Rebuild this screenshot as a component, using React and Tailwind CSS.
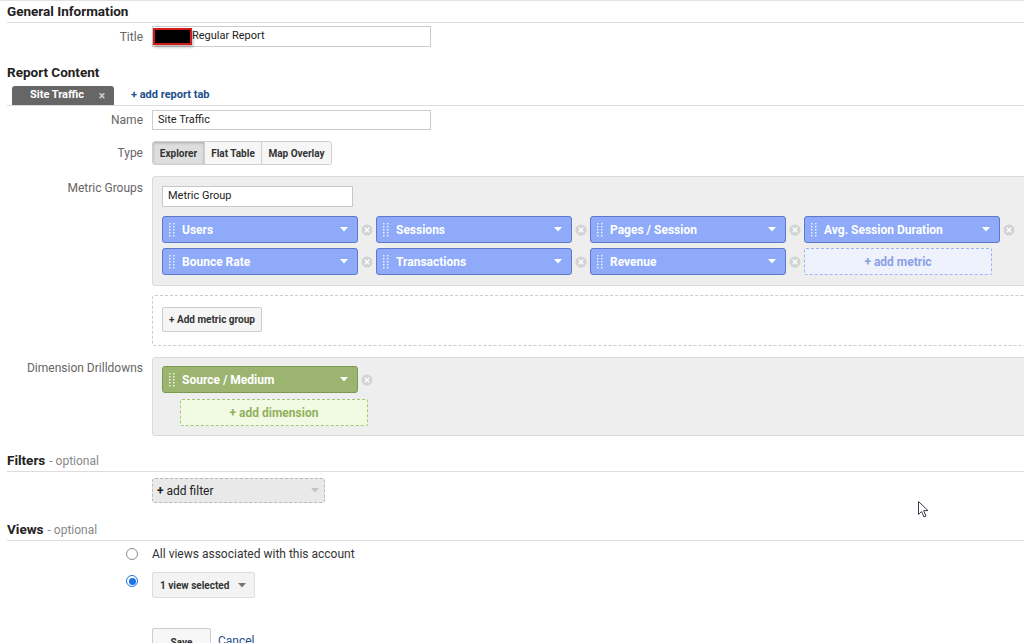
import React from "react";

const Handle = ({ color = "#ffffff" }) => (
  <svg width="6" height="14" viewBox="0 0 6 14" className="shrink-0">
    {[0, 1, 2, 3, 4].map((r) => (
      <React.Fragment key={r}>
        <rect x="0" y={r * 3} width="1.5" height="1.5" fill={color} opacity="0.85" />
        <rect x="4" y={r * 3} width="1.5" height="1.5" fill={color} opacity="0.85" />
      </React.Fragment>
    ))}
  </svg>
);

const Caret = ({ color = "#ffffff" }) => (
  <svg width="8" height="5" viewBox="0 0 8 5" className="shrink-0">
    <path d="M0 0 L8 0 L4 4.5 Z" fill={color} />
  </svg>
);

const RemoveIcon = () => (
  <svg width="12" height="12" viewBox="0 0 12 12" className="shrink-0">
    <circle cx="6" cy="6" r="5.5" fill="#d3d3d3" />
    <path d="M3.8 3.8 L8.2 8.2 M8.2 3.8 L3.8 8.2" stroke="#ffffff" strokeWidth="1.4" />
  </svg>
);

const Chip = ({ label, green }) => (
  <div className="flex items-center">
    <div
      className={
        green
          ? "flex items-center w-[196px] h-[27px] rounded-[3px] border border-[#7d9a53] bg-[#9bb570] pl-[6px] pr-[9px]"
          : "flex items-center w-[196px] h-[27px] rounded-[3px] border border-[#5f77cc] bg-[#8eaaf8] pl-[6px] pr-[9px]"
      }
    >
      <Handle />
      <span className="ml-[7px] flex-1 text-[12px] font-bold text-white leading-none">{label}</span>
      <Caret />
    </div>
    <div className="w-[18px] flex justify-center">
      <RemoveIcon />
    </div>
  </div>
);

const Label = ({ children, className = "" }) => (
  <div className={"text-right text-[12px] text-[#666666] " + className}>{children}</div>
);

const Heading = ({ title, optional, className = "" }) => (
  <div className={"ml-[7px] h-[22px] border-b border-[#dddddd] flex items-center " + className}>
    <span className="text-[13.5px] font-bold text-[#222222]">{title}</span>
    {optional && <span className="text-[12px] text-[#888888] ml-[4px]">- optional</span>}
  </div>
);

export default function App() {
  return (
    <div className="w-[1024px] h-[643px] overflow-hidden bg-white relative border-t border-[#e2e2e2] font-['Roboto','Liberation_Sans',sans-serif] text-[#222222]">
      <Heading title="General Information" className="-mt-[1px] h-[23px]" />

      {/* Title */}
      <div className="mt-[3px] grid grid-cols-[143px_1fr] gap-x-[9px] items-center">
        <Label className="pt-[1px]">Title</Label>
        <div className="w-[279px] h-[21px] border border-[#cccccc] flex items-center">
          <div className="w-[39px] h-[17px] bg-black border-2 border-[#d11a1a] shadow-[1px_2px_3px_rgba(0,0,0,0.3)]" />
          <span className="text-[11px] text-[#222222]">Regular Report</span>
        </div>
      </div>

      {/* Report Content */}
      <div className="mt-[16px] ml-[7px] h-[18px] flex items-center">
        <span className="text-[13.5px] font-bold text-[#222222]">Report Content</span>
      </div>
      <div className="mt-[5px] ml-[7px] border-b border-[#dddddd] flex items-end h-[20px]">
        <div className="ml-[5px] w-[102px] h-[19px] bg-[#666666] rounded-t-[3px] flex items-center pl-[18px] pr-[9px]">
          <span className="text-[11px] font-bold text-white flex-1">Site Traffic</span>
          <span className="text-[12px] font-bold text-[#cfcfcf] leading-none">×</span>
        </div>
        <div className="ml-[17px] h-[19px] flex items-center">
          <span className="text-[11px] font-bold text-[#1e4f8d]">+ add report tab</span>
        </div>
      </div>

      {/* Name */}
      <div className="mt-[4px] grid grid-cols-[143px_1fr] gap-x-[9px] items-center">
        <Label>Name</Label>
        <div className="w-[279px] h-[20px] border border-[#cccccc] flex items-center pl-[5px]">
          <span className="text-[11px] text-[#222222]">Site Traffic</span>
        </div>
      </div>

      {/* Type */}
      <div className="mt-[11px] grid grid-cols-[143px_1fr] gap-x-[9px] items-start">
        <Label className="pt-[3px]">Type</Label>
        <div className="flex h-[24px] w-fit border border-[#d0d0d0] rounded-[3px] overflow-hidden text-[10px] font-bold text-[#333333]">
          <div className="w-[51px] flex items-center justify-center bg-[#dedede] shadow-[inset_0_1px_3px_rgba(0,0,0,0.25)]">Explorer</div>
          <div className="w-[57px] flex items-center justify-center bg-[#f6f6f6] border-l border-[#d0d0d0]">Flat Table</div>
          <div className="w-[70px] flex items-center justify-center bg-[#f6f6f6] border-l border-[#d0d0d0]">Map Overlay</div>
        </div>
      </div>

      {/* Metric Groups */}
      <div className="mt-[11px] grid grid-cols-[143px_1fr] gap-x-[9px] items-start">
        <Label className="pt-[3px]">Metric Groups</Label>
        <div className="w-[890px] h-[110px] bg-[#eeeeee] border border-[#dadada] rounded-[3px] pl-[9px] pt-[9px]">
          <div className="w-[191px] h-[21px] bg-white border border-[#c8c8c8] flex items-center pl-[5px]">
            <span className="text-[11px] text-[#222222]">Metric Group</span>
          </div>
          <div className="mt-[9px] flex flex-col gap-[5px]">
            <div className="flex">
              <Chip label="Users" />
              <Chip label="Sessions" />
              <Chip label="Pages / Session" />
              <Chip label="Avg. Session Duration" />
            </div>
            <div className="flex">
              <Chip label="Bounce Rate" />
              <Chip label="Transactions" />
              <Chip label="Revenue" />
              <div className="w-[188px] h-[27px] border border-dashed border-[#9fb3ef] bg-[#eef2fd] rounded-[2px] flex items-center justify-center">
                <span className="text-[12px] font-bold text-[#8b9fe6]">+ add metric</span>
              </div>
            </div>
          </div>
        </div>
      </div>

      {/* Add metric group */}
      <div className="mt-[9px] grid grid-cols-[143px_1fr] gap-x-[9px]">
        <div />
        <div className="w-[890px] h-[51px] border border-dashed border-[#cccccc] rounded-[3px] pl-[9px] pt-[11px]">
          <div className="w-[100px] h-[25px] bg-[#f5f5f5] border border-[#cccccc] rounded-[2px] flex items-center justify-center">
            <span className="text-[10px] font-bold text-[#333333]">+ Add metric group</span>
          </div>
        </div>
      </div>

      {/* Dimension Drilldowns */}
      <div className="mt-[11px] grid grid-cols-[143px_1fr] gap-x-[9px] items-start">
        <Label className="pt-[2px]">Dimension Drilldowns</Label>
        <div className="w-[890px] h-[79px] bg-[#eeeeee] border border-[#dadada] rounded-[3px] pl-[9px] pt-[8px]">
          <Chip label="Source / Medium" green />
          <div className="mt-[6px] ml-[18px] w-[188px] h-[27px] border border-dashed border-[#a9c578] bg-[#f1fbe4] rounded-[2px] flex items-center justify-center">
            <span className="text-[12px] font-bold text-[#91b05c]">+ add dimension</span>
          </div>
        </div>
      </div>

      {/* Filters */}
      <Heading title="Filters" optional className="mt-[14px]" />
      <div className="mt-[6px] grid grid-cols-[143px_1fr] gap-x-[9px]">
        <div />
        <div className="w-[173px] h-[25px] bg-[#e9e9e9] border border-dashed border-[#bbbbbb] rounded-[3px] flex items-center pl-[4px] pr-[5px]">
          <span className="text-[12px] text-[#222222] flex-1">
            <span className="font-bold">+</span> add filter
          </span>
          <Caret color="#c4c4c4" />
        </div>
      </div>

      {/* Views */}
      <Heading title="Views" optional className="mt-[16px]" />
      <div className="mt-[6px] flex items-center h-[14px]">
        <div className="ml-[126px] w-[12px] h-[12px] rounded-full border border-[#8a8a8a] bg-white" />
        <span className="ml-[14px] text-[12px] text-[#333333]">All views associated with this account</span>
      </div>
      <div className="mt-[11px] flex items-start">
        <div className="ml-[126px] mt-[3px] w-[12px] h-[12px] rounded-full border border-[#1a73e8] bg-white flex items-center justify-center">
          <div className="w-[7px] h-[7px] rounded-full bg-[#1a73e8]" />
        </div>
        <div className="ml-[14px] w-[103px] h-[26px] bg-[#f3f3f3] border border-[#dddddd] rounded-[2px] flex items-center pl-[7px] pr-[8px]">
          <span className="text-[10px] font-bold text-[#333333] flex-1">1 view selected</span>
          <Caret color="#777777" />
        </div>
      </div>

      {/* Save / Cancel */}
      <div className="mt-[30px] flex items-start">
        <div className="ml-[152px] w-[59px] h-[26px] bg-[#f7f7f7] border border-[#cccccc] rounded-[2px] flex items-start justify-center">
          <span className="text-[10px] font-bold text-[#333333] mt-[6px]">Save</span>
        </div>
        <span className="ml-[7px] mt-[4px] text-[12px] text-[#1e4f8d]">Cancel</span>
      </div>

      {/* Cursor */}
      <svg className="absolute left-[918px] top-[500px]" width="12" height="18" viewBox="0 0 12 18">
        <path d="M0.5 0.5 L0.5 13.5 L3.5 10.5 L6 16 L8 15 L5.6 9.6 L10 9.6 Z" fill="#ffffff" stroke="#3a3a4a" strokeWidth="1" strokeLinejoin="round" />
      </svg>
    </div>
  );
}
